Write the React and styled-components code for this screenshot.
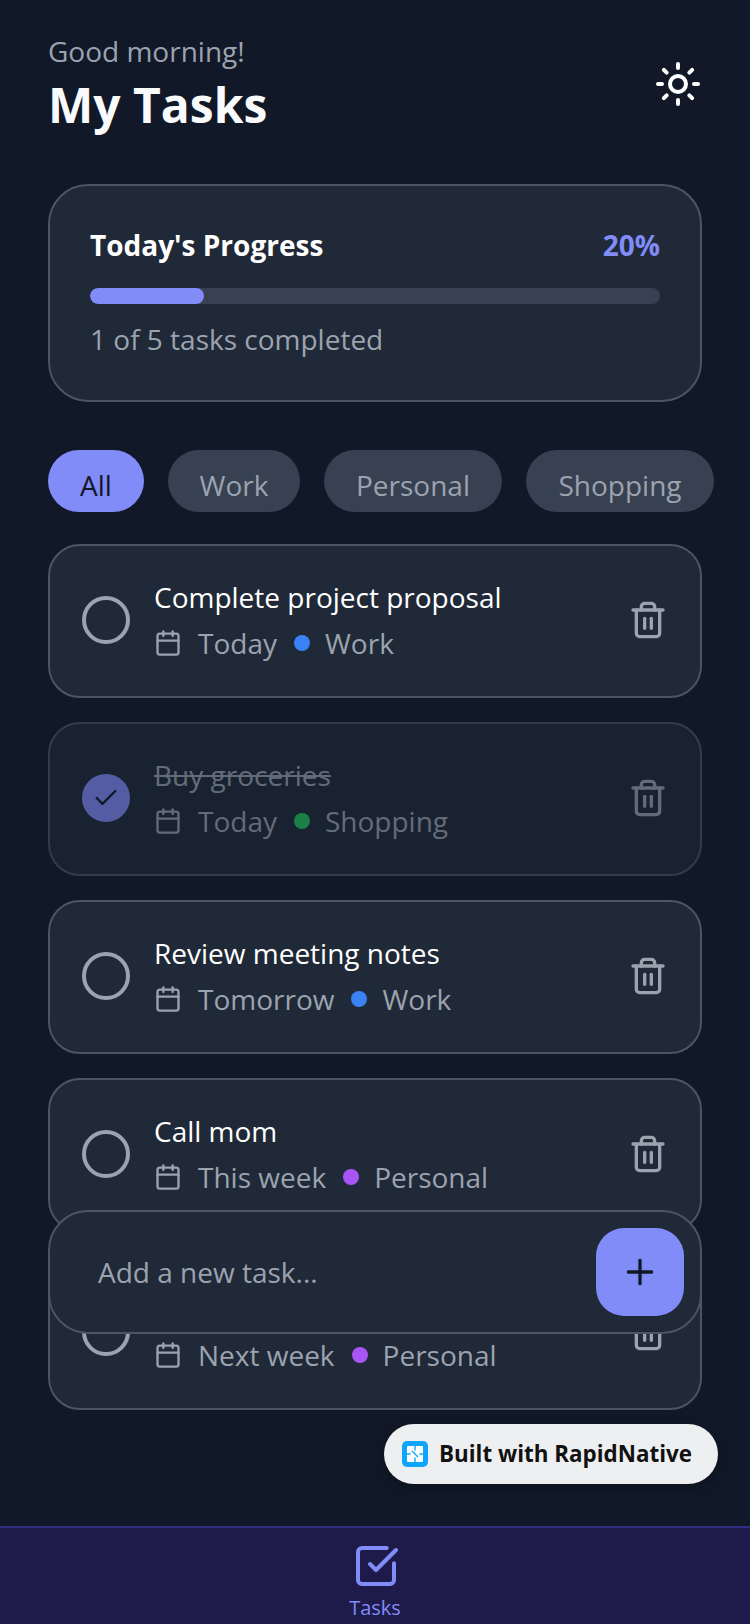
import React from 'react';
import styled, { createGlobalStyle } from 'styled-components';
import { Sun, Calendar, Trash2, Plus, Check, SquareCheckBig } from 'lucide-react';

const tasks = [
  { id: 1, title: 'Complete project proposal', due: 'Today', tag: 'Work', dot: '#3b82f6' },
  { id: 2, title: 'Buy groceries', due: 'Today', tag: 'Shopping', dot: '#22c55e', done: true },
  { id: 3, title: 'Review meeting notes', due: 'Tomorrow', tag: 'Work', dot: '#3b82f6' },
  { id: 4, title: 'Call mom', due: 'This week', tag: 'Personal', dot: '#a855f7' },
  { id: 5, title: 'Plan weekend trip', due: 'Next week', tag: 'Personal', dot: '#a855f7' },
];

const filters = [
  { name: 'All', width: 96 },
  { name: 'Work', width: 132 },
  { name: 'Personal', width: 178 },
  { name: 'Shopping', width: 188 },
];

const App = () => (
  <Screen>
    <GlobalStyle />
    <Main>
      <Header>
        <div>
          <Greeting>Good morning!</Greeting>
          <Title>My Tasks</Title>
        </div>
        <ThemeButton>
          <Sun size={48} color="#ffffff" strokeWidth={2} />
        </ThemeButton>
      </Header>

      <ProgressCard>
        <ProgressHead>
          <ProgressLabel>Today's Progress</ProgressLabel>
          <ProgressValue>20%</ProgressValue>
        </ProgressHead>
        <Track>
          <Fill style={{ width: '20%' }} />
        </Track>
        <ProgressNote>1 of 5 tasks completed</ProgressNote>
      </ProgressCard>

      <Filters>
        {filters.map((f, i) => (
          <Chip key={f.name} $width={f.width} $active={i === 0}>{f.name}</Chip>
        ))}
      </Filters>

      <TaskList>
        {tasks.map((task) => (
          <TaskCard key={task.id} $done={task.done}>
            <Circle $done={task.done}>
              {task.done && <Check size={28} color="#111827" strokeWidth={2} />}
            </Circle>
            <TaskBody>
              <TaskTitle $done={task.done}>{task.title}</TaskTitle>
              <TaskMeta>
                <Calendar size={28} color="#9ca3af" strokeWidth={2} />
                <MetaText>{task.due}</MetaText>
                <Dot $color={task.dot} />
                <MetaText>{task.tag}</MetaText>
              </TaskMeta>
            </TaskBody>
            <Trash2 size={40} color="#9ca3af" strokeWidth={2} />
          </TaskCard>
        ))}
      </TaskList>

      <AddBar>
        <AddPlaceholder>Add a new task...</AddPlaceholder>
        <AddButton>
          <Plus size={40} color="#111827" strokeWidth={2} />
        </AddButton>
      </AddBar>

      <BuiltBadge>
        <svg width="26" height="26" viewBox="0 0 26 26">
          <rect width="26" height="26" rx="5" fill="#0ea5ff" />
          <rect x="5" y="5" width="16" height="16" rx="1" fill="#ffffff" />
          <path d="M13 5v4.5M13 21v-4.5M5 13h3.5M21 13h-3.5M10 10l6 6" stroke="#0ea5ff" strokeWidth="1.4" fill="none" />
        </svg>
        <BuiltText>Built with RapidNative</BuiltText>
      </BuiltBadge>
    </Main>

    <TabBar>
      <TabItem>
        <SquareCheckBig size={48} color="#818cf8" strokeWidth={2} />
        <TabLabel>Tasks</TabLabel>
      </TabItem>
    </TabBar>
  </Screen>
);

export default App;

const GlobalStyle = createGlobalStyle`
  html, body {
    margin: 0;
    padding: 0;
    background: #111827;
  }
  * {
    box-sizing: border-box;
  }
`;

const Screen = styled.div`
  width: 750px;
  height: 1624px;
  display: flex;
  flex-direction: column;
  overflow: hidden;
  background: #111827;
  font-family: 'Open Sans', sans-serif;
`;

const Main = styled.div`
  position: relative;
  flex: 1;
  min-height: 0;
  padding: 31px 48px 0;
`;

const Header = styled.div`
  display: flex;
  justify-content: space-between;
  align-items: flex-start;
  height: 113px;
`;

const Greeting = styled.div`
  font-size: 28px;
  line-height: 40px;
  color: #9ca3af;
`;

const Title = styled.div`
  margin-top: 2px;
  font-size: 48px;
  line-height: 64px;
  font-weight: 700;
  color: #f9fafb;
`;

const ThemeButton = styled.div`
  display: flex;
  margin-top: 29px;
`;

const ProgressCard = styled.div`
  margin-top: 40px;
  height: 218px;
  padding: 39px 40px;
  background: #1f2937;
  border: 2px solid #4b5563;
  border-radius: 40px;
`;

const ProgressHead = styled.div`
  display: flex;
  justify-content: space-between;
  align-items: center;
  height: 40px;
`;

const ProgressLabel = styled.div`
  font-size: 28px;
  font-weight: 700;
  color: #ffffff;
`;

const ProgressValue = styled.div`
  font-size: 28px;
  font-weight: 700;
  color: #818cf8;
`;

const Track = styled.div`
  margin-top: 23px;
  height: 16px;
  border-radius: 8px;
  background: #374151;
  overflow: hidden;
`;

const Fill = styled.div`
  height: 100%;
  border-radius: 8px;
  background: #818cf8;
`;

const ProgressNote = styled.div`
  margin-top: 15px;
  font-size: 28px;
  line-height: 40px;
  color: #9ca3af;
`;

const Filters = styled.div`
  display: flex;
  gap: 24px;
  margin-top: 48px;
  width: 720px;
`;

const Chip = styled.div`
  flex: none;
  width: ${(p) => p.$width}px;
  height: 62px;
  padding-top: 8px;
  border-radius: 32px;
  font-size: 28px;
  line-height: 54px;
  text-align: center;
  white-space: nowrap;
  background: ${(p) => (p.$active ? '#818cf8' : '#374151')};
  color: ${(p) => (p.$active ? '#111827' : '#9ca3af')};
`;

const TaskList = styled.div`
  display: flex;
  flex-direction: column;
  gap: 24px;
  margin-top: 32px;
`;

const TaskCard = styled.div`
  display: flex;
  align-items: center;
  height: 154px;
  padding: 0 32px 2px;
  background: #1f2937;
  border: 2px solid #4b5563;
  border-radius: 32px;
  opacity: ${(p) => (p.$done ? 0.6 : 1)};
`;

const Circle = styled.div`
  flex: none;
  display: flex;
  align-items: center;
  justify-content: center;
  width: 48px;
  height: 48px;
  border-radius: 50%;
  border: 4px solid ${(p) => (p.$done ? '#818cf8' : '#9ca3af')};
  background: ${(p) => (p.$done ? '#818cf8' : 'transparent')};
`;

const TaskBody = styled.div`
  flex: 1;
  margin-left: 24px;
`;

const TaskTitle = styled.div`
  font-size: 28px;
  line-height: 40px;
  color: #ffffff;
  ${(p) => p.$done && 'color: #9ca3af; text-decoration: line-through;'}
`;

const TaskMeta = styled.div`
  display: flex;
  align-items: center;
  margin-top: 6px;
`;

const MetaText = styled.div`
  font-size: 28px;
  line-height: 40px;
  color: #9ca3af;
  margin-left: 16px;
`;

const Dot = styled.div`
  width: 16px;
  height: 16px;
  border-radius: 50%;
  margin: 0 -1px 0 17px;
  background: ${(p) => p.$color};
`;

const AddBar = styled.div`
  position: absolute;
  left: 48px;
  right: 48px;
  top: 1210px;
  height: 124px;
  display: flex;
  align-items: center;
  justify-content: space-between;
  padding: 0 16px 0 48px;
  background: #1f2937;
  border: 2px solid #4b5563;
  border-radius: 40px;
`;

const AddPlaceholder = styled.div`
  font-size: 28px;
  color: #9ca3af;
`;

const AddButton = styled.div`
  display: flex;
  align-items: center;
  justify-content: center;
  width: 88px;
  height: 88px;
  border-radius: 28px;
  background: #818cf8;
`;

const BuiltBadge = styled.div`
  position: absolute;
  left: 384px;
  top: 1424px;
  width: 334px;
  height: 60px;
  display: flex;
  align-items: center;
  gap: 11px;
  padding-left: 18px;
  border-radius: 30px;
  background: #eeeff0;
  box-shadow: 0 4px 12px rgba(0, 0, 0, 0.25);
`;

const BuiltText = styled.div`
  margin-top: -1px;
  font-size: 22.4px;
  font-weight: 700;
  color: #111111;
  white-space: nowrap;
`;

const TabBar = styled.div`
  flex: none;
  height: 98px;
  display: flex;
  justify-content: center;
  padding-top: 14px;
  background: #1e1b4b;
  border-top: 2px solid #312e81;
`;

const TabItem = styled.div`
  display: flex;
  flex-direction: column;
  align-items: center;
  height: 73px;
  overflow: hidden;

  svg {
    flex: none;
    margin-left: 2px;
  }
`;

const TabLabel = styled.div`
  margin-top: 4px;
  font-size: 20px;
  line-height: 28px;
  color: #818cf8;
`;
